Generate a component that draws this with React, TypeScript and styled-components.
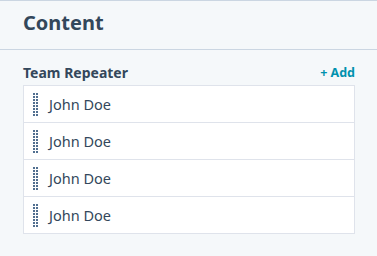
import React from "react";
import styled, { createGlobalStyle } from "styled-components";

const Global = createGlobalStyle`
  html, body { margin: 0; padding: 0; background: #f5f8fa; }
  body { font-family: "Noto Sans", "DejaVu Sans", sans-serif; color: #33475b; }
`;

const Page = styled.div`
  width: 377px;
  height: 256px;
  background: #f5f8fa;
  border-top: 1px solid #cbd6e2;
  box-sizing: border-box;
  overflow: hidden;
`;

const Header = styled.header`
  height: 49px;
  box-sizing: border-box;
  border-bottom: 1px solid #cbd6e2;
  padding: 7px 23px 0;
  display: flex;
  align-items: flex-start;
`;

const Title = styled.h1`
  margin: 0;
  font-size: 20px;
  font-weight: 700;
  line-height: 30px;
  color: #33475b;
`;

const Section = styled.section`
  padding: 11px 22px 0 23px;
`;

const SectionHead = styled.div`
  display: flex;
  justify-content: space-between;
  align-items: center;
  height: 22px;
  margin-bottom: 2px;
`;

const Label = styled.span`
  font-size: 14px;
  font-weight: 700;
  color: #33475b;
`;

const AddButton = styled.button`
  background: none;
  border: 0;
  padding: 0;
  font-family: inherit;
  font-size: 12.5px;
  font-weight: 700;
  color: #0091ae;
  cursor: pointer;
`;

const List = styled.ul`
  list-style: none;
  margin: 0;
  padding: 0;
  background: #fff;
  border: 1px solid #dfe3eb;
`;

const Row = styled.li`
  display: flex;
  align-items: center;
  height: 36px;
  padding-left: 9px;
  gap: 11px;
  & + & { border-top: 1px solid #dfe3eb; }
`;

const Handle = styled.span`
  display: grid;
  grid-template-columns: 2px 2px;
  grid-auto-rows: 2px;
  column-gap: 1px;
  row-gap: 1px;
  width: 5px;
`;

const Dot = styled.i`
  display: block;
  width: 2px;
  height: 2px;
  background: #516f90;
`;

const Name = styled.span`
  font-size: 14.5px;
  color: #33475b;
`;

const items = ["John Doe", "John Doe", "John Doe", "John Doe"];

export default function App() {
  return (
    <Page>
      <Global />
      <Header>
        <Title>Content</Title>
      </Header>
      <Section>
        <SectionHead>
          <Label>Team Repeater</Label>
          <AddButton>+ Add</AddButton>
        </SectionHead>
        <List>
          {items.map((n, i) => (
            <Row key={i}>
              <Handle>
                {Array.from({ length: 16 }).map((_, j) => (
                  <Dot key={j} />
                ))}
              </Handle>
              <Name>{n}</Name>
            </Row>
          ))}
        </List>
      </Section>
    </Page>
  );
}
